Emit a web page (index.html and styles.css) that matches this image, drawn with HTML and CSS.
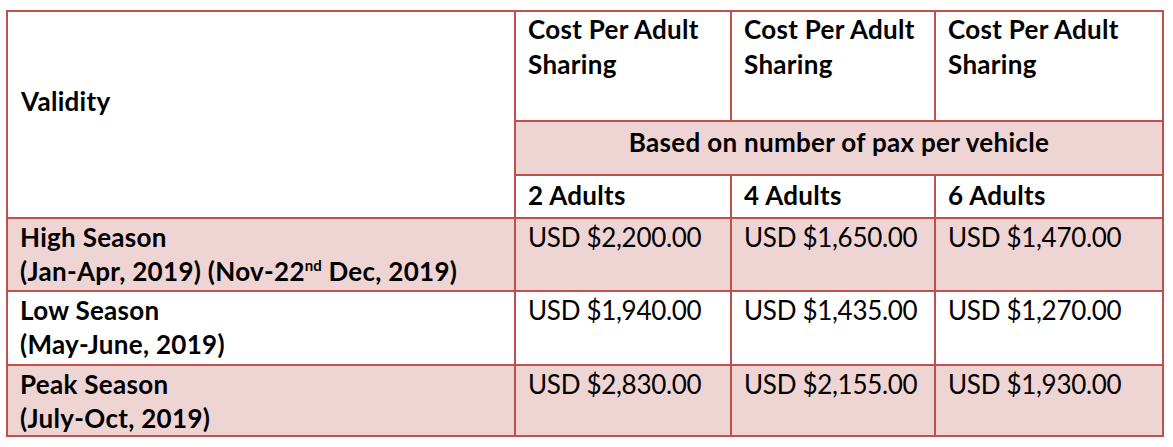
FILE: index.html
```html
<!DOCTYPE html>
<html lang="en">
<head>
<meta charset="utf-8">
<title>Rates</title>
<link rel="stylesheet" href="styles.css">
</head>
<body>
<table class="rates">
  <colgroup>
    <col class="c-validity">
    <col class="c-a">
    <col class="c-b">
    <col class="c-c">
  </colgroup>
  <tbody>
    <tr class="r-head">
      <td class="hd validity" rowspan="3">Validity</td>
      <td class="hd">Cost Per Adult<br>Sharing</td>
      <td class="hd">Cost Per Adult<br>Sharing</td>
      <td class="hd">Cost Per Adult<br>Sharing</td>
    </tr>
    <tr class="r-based pink">
      <td class="hd center" colspan="3">Based on number of pax per vehicle</td>
    </tr>
    <tr class="r-pax">
      <td class="hd">2 Adults</td>
      <td class="hd">4 Adults</td>
      <td class="hd">6 Adults</td>
    </tr>
    <tr class="r-data pink r-high">
      <td class="hd">High Season<br>(Jan-Apr, 2019) (Nov-22<sup>nd</sup> Dec, 2019)</td>
      <td>USD $2,200.00</td>
      <td>USD $1,650.00</td>
      <td>USD $1,470.00</td>
    </tr>
    <tr class="r-data r-low">
      <td class="hd">Low Season<br>(May-June, 2019)</td>
      <td>USD $1,940.00</td>
      <td>USD $1,435.00</td>
      <td>USD $1,270.00</td>
    </tr>
    <tr class="r-data pink r-peak">
      <td class="hd">Peak Season<br>(July-Oct, 2019)</td>
      <td>USD $2,830.00</td>
      <td>USD $2,155.00</td>
      <td>USD $1,930.00</td>
    </tr>
  </tbody>
</table>
</body>
</html>
```

FILE: styles.css
```css
html, body {
  margin: 0;
  padding: 0;
  background: #ffffff;
}

.rates {
  margin: 10px 0 0 6px;
  width: 1158px;
  table-layout: fixed;
  border-collapse: separate;
  border-spacing: 0;
  border-top: 2px solid #c0504d;
  border-left: 2px solid #c0504d;
  font-family: Lato, "Liberation Sans", sans-serif;
  font-size: 26px;
  color: #000;
}

.c-validity { width: 508px; }
.c-a { width: 216px; }
.c-b { width: 204px; }
.c-c { width: 228px; }

.rates td {
  border-right: 2px solid #c0504d;
  border-bottom: 2px solid #c0504d;
  padding: 1px 6px 0 12px;
  vertical-align: top;
  line-height: 34px;
  font-weight: 400;
  letter-spacing: -0.3px;
  white-space: nowrap;
}

.rates td.hd {
  font-weight: 700;
  letter-spacing: 0.3px;
}

.rates td.center {
  text-align: center;
  vertical-align: middle;
  padding: 0 0 12px 0;
}

.rates td.validity {
  vertical-align: middle;
  padding: 0 0 26px 13px;
  background: #ffffff;
}

.pink td {
  background: #efd4d4;
}

.r-head { height: 110px; }
.r-based { height: 54px; }
.r-pax { height: 43px; }
.r-high { height: 73px; }
.r-low { height: 74px; }
.r-peak { height: 71px; }

.r-head td {
  padding-top: 0;
  line-height: 35px;
}

.r-pax td {
  padding-top: 0;
  padding-bottom: 4px;
  vertical-align: middle;
}

.rates sup {
  font-size: 15px;
  line-height: 0;
  vertical-align: 10px;
  letter-spacing: 0;
}
```
